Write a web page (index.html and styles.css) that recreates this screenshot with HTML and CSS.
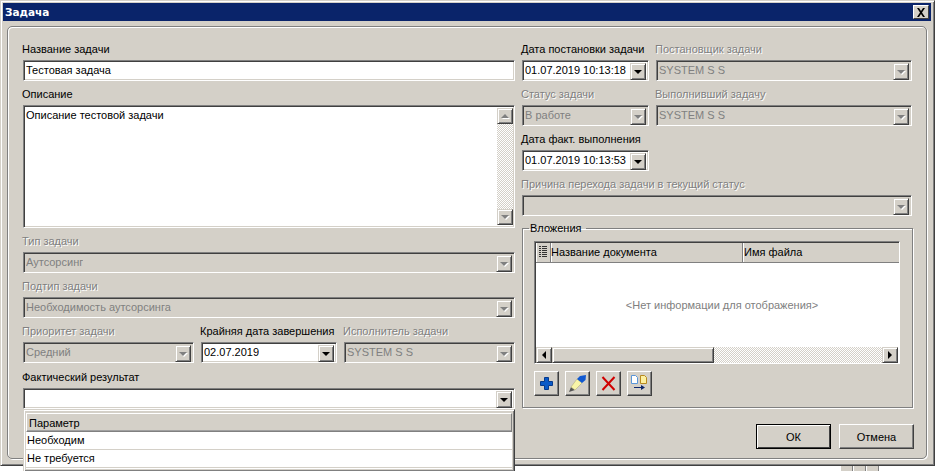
FILE: index.html
```html
<!DOCTYPE html>
<html lang="ru">
<head>
    <meta charset="UTF-8">
    <meta name="viewport" content="width=device-width, initial-scale=1.0">
    <title>Задача</title>
    <link rel="stylesheet" href="styles.css">
</head>
<body>
    <div class="window">
        <div class="titlebar">
            <span>Задача</span>
            <button class="close-btn">
                <svg width="10" height="9" viewBox="0 0 10 9"><path d="M1 0h2l2 3 2-3h2L6 4.500 9 9H7L5 6 3 9H1l3-4.500z" fill="#000"/></svg>
            </button>
        </div>
        <div class="panel">
            <div class="col-left">
                <div class="field">
                    <label>Название задачи</label>
                    <div class="input">Тестовая задача</div>
                </div>
                <div class="field">
                    <label>Описание</label>
                    <div class="input textarea">
                        <span class="textarea-text">Описание тестовой задачи</span>
                        <div class="vscroll">
                            <div class="arrow-btn disabled"><i class="tri-up"></i></div>
                            <div class="track"></div>
                            <div class="arrow-btn disabled"><i class="tri-down"></i></div>
                        </div>
                    </div>
                </div>
                <div class="field disabled">
                    <label>Тип задачи</label>
                    <div class="input combo"><span>Аутсорсинг</span><div class="arrow-btn"><i class="tri-down"></i></div></div>
                </div>
                <div class="field disabled">
                    <label>Подтип задачи</label>
                    <div class="input combo"><span>Необходимость аутсорсинга</span><div class="arrow-btn"><i class="tri-down"></i></div></div>
                </div>
                <div class="row-three">
                    <div class="field disabled">
                        <label>Приоритет задачи</label>
                        <div class="input combo"><span>Средний</span><div class="arrow-btn"><i class="tri-down"></i></div></div>
                    </div>
                    <div class="field">
                        <label>Крайняя дата завершения</label>
                        <div class="input combo"><span>02.07.2019</span><div class="arrow-btn"><i class="tri-down"></i></div></div>
                    </div>
                    <div class="field disabled">
                        <label>Исполнитель задачи</label>
                        <div class="input combo"><span>SYSTEM S S</span><div class="arrow-btn"><i class="tri-down"></i></div></div>
                    </div>
                </div>
                <div class="field result-field">
                    <label>Фактический результат</label>
                    <div class="input combo"><span></span><div class="arrow-btn"><i class="tri-down"></i></div></div>
                    <div class="dropdown">
                        <div class="dropdown-inner">
                            <div class="dropdown-head">Параметр</div>
                            <div class="dropdown-item">Необходим</div>
                            <div class="dropdown-item">Не требуется</div>
                        </div>
                    </div>
                </div>
            </div>

            <div class="col-right">
                <div class="row-two">
                    <div class="field">
                        <label>Дата постановки задачи</label>
                        <div class="input combo"><span>01.07.2019 10:13:18</span><div class="arrow-btn"><i class="tri-down"></i></div></div>
                    </div>
                    <div class="field disabled">
                        <label>Постановщик задачи</label>
                        <div class="input combo"><span>SYSTEM S S</span><div class="arrow-btn"><i class="tri-down"></i></div></div>
                    </div>
                </div>
                <div class="row-two">
                    <div class="field disabled">
                        <label>Статус задачи</label>
                        <div class="input combo"><span>В работе</span><div class="arrow-btn"><i class="tri-down"></i></div></div>
                    </div>
                    <div class="field disabled">
                        <label>Выполнивший задачу</label>
                        <div class="input combo"><span>SYSTEM S S</span><div class="arrow-btn"><i class="tri-down"></i></div></div>
                    </div>
                </div>
                <div class="row-two">
                    <div class="field">
                        <label>Дата факт. выполнения</label>
                        <div class="input combo"><span>01.07.2019 10:13:53</span><div class="arrow-btn"><i class="tri-down"></i></div></div>
                    </div>
                </div>
                <div class="field disabled">
                    <label>Причина перехода задачи в текущий статус</label>
                    <div class="input combo"><span></span><div class="arrow-btn"><i class="tri-down"></i></div></div>
                </div>

                <fieldset class="attachments">
                    <legend>Вложения</legend>
                    <div class="grid">
                        <div class="grid-head">
                            <div class="head-cell head-icon">
                                <svg width="8" height="11" viewBox="0 0 8 11"><path d="M0 0h2v1H0zM3 0h5v1H3zM0 2h2v1H0zM3 2h5v1H3zM0 4h2v1H0zM3 4h5v1H3zM0 6h2v1H0zM3 6h5v1H3zM0 8h2v1H0zM3 8h5v1H3zM0 10h2v1H0zM3 10h5v1H3z" fill="#333"/></svg>
                            </div>
                            <div class="head-cell head-name">Название документа</div>
                            <div class="head-cell head-file">Имя файла</div>
                        </div>
                        <div class="grid-empty">&lt;Нет информации для отображения&gt;</div>
                        <div class="hscroll">
                            <div class="arrow-btn"><i class="tri-left"></i></div>
                            <div class="thumb"></div>
                            <div class="track"></div>
                            <div class="arrow-btn"><i class="tri-right"></i></div>
                        </div>
                    </div>
                    <div class="tools">
                        <button class="tool-btn">
                            <svg width="13" height="13" viewBox="0 0 13 13"><path d="M4.500.5h4v4h4v4h-4v4h-4v-4h-4v-4h4z" fill="#0a5ac8" stroke="#063a8c"/></svg>
                        </button>
                        <button class="tool-btn">
                            <svg width="17" height="17" viewBox="0 0 17 17"><path d="M0 17l2-5 4 3z" fill="#555"/><path d="M2 12l6-8 5 4-7 7z" fill="#f8f4a8" stroke="#a8a470" stroke-width=".5"/><path d="M8 4l3-3 6-1-.5 5-3.500 3z" fill="#1058d0"/></svg>
                        </button>
                        <button class="tool-btn">
                            <svg width="15" height="15" viewBox="0 0 15 15"><path d="M1.500 1l12 13M13.500 1L1.500 14" stroke="#d00000" stroke-width="2" fill="none"/></svg>
                        </button>
                        <button class="tool-btn">
                            <svg width="23" height="23" viewBox="0 0 23 23"><path d="M3.500 3.500h4l2 2v6h-6z" fill="#fff" stroke="#5a96d8"/><path d="M12.500 3.500h4l2 2v6h-6z" fill="#fdf0a0" stroke="#b88a20"/><path d="M6 15.500h8" stroke="#0a246a"/><path d="M13 13l4 2.500-4 2.500z" fill="#0a246a"/></svg>
                        </button>
                    </div>
                </fieldset>

                <div class="actions">
                    <button class="btn btn-default">ОК</button>
                    <button class="btn">Отмена</button>
                </div>
            </div>
        </div>
    </div>
    <div class="taskbar-bits"><i></i><i></i><i></i></div>
</body>
</html>
```

FILE: styles.css
```css
* {
    box-sizing: border-box;
}

body {
    margin: 0;
    height: 471px;
    overflow: hidden;
    background-color: white;
    font-family: "Liberation Sans", Arial, sans-serif;
    font-size: 11px;
    color: black;
}

.window {
    width: 935px;
    height: 466px;
    padding: 3px;
    background-color: #d4d0c8;
    border: 1px solid;
    border-color: #d4d0c8 #404040 #404040 #d4d0c8;
    box-shadow: inset 1px 1px 0 white, inset -1px -1px 0 #808080;
}

.titlebar {
    height: 18px;
    margin: -1px 0 0 -1px;
    padding: 0 2px 0 2px;
    display: flex;
    align-items: center;
    justify-content: space-between;
    background-color: #0a246a;
    color: white;
    font-family: "DejaVu Sans", sans-serif;
    font-size: 10.500px;
    font-weight: bold;
}

.close-btn {
    width: 16px;
    height: 14px;
    padding: 0;
    display: flex;
    align-items: center;
    justify-content: center;
    background-color: #d4d0c8;
    border: 1px solid;
    border-color: white #404040 #404040 white;
}

.panel {
    width: 920px;
    height: 433px;
    margin: 5px 0 0 3px;
    padding: 15px 0 0 15px;
    display: flex;
    gap: 7px;
    border: 1px solid #808080;
    border-radius: 5px;
    box-shadow: 1px 1px 0 white, inset 1px 1px 0 white;
}

.col-left {
    width: 492px;
    display: flex;
    flex-direction: column;
    gap: 6px;
}

.col-right {
    width: 390px;
    display: flex;
    flex-direction: column;
    gap: 6px;
}

.field {
    display: flex;
    flex-direction: column;
    min-width: 0;
}

label {
    height: 14px;
    margin: 0 0 4px -1px;
    line-height: 14px;
    white-space: nowrap;
}

.field.disabled label {
    color: #808080;
    text-shadow: 1px 1px 0 white;
}

.input {
    height: 21px;
    padding: 2px;
    line-height: 15px;
    background-color: white;
    border: 1px solid;
    border-color: #808080 white white #808080;
    box-shadow: inset 1px 1px 0 #404040, inset -1px -1px 0 #d4d0c8;
    white-space: nowrap;
}

.combo {
    display: flex;
    justify-content: space-between;
}

.combo span {
    overflow: hidden;
}

.field.disabled .input {
    background-color: #d4d0c8;
    color: #808080;
}

.textarea {
    height: 123px;
    padding-right: 1px;
    display: flex;
    justify-content: space-between;
}

.textarea-text {
    height: 17px;
}

.arrow-btn {
    flex: none;
    width: 16px;
    height: 17px;
    display: flex;
    align-items: center;
    justify-content: center;
    background-color: #d4d0c8;
    border: 1px solid;
    border-color: #d4d0c8 #404040 #404040 #d4d0c8;
    box-shadow: inset 1px 1px 0 white, inset -1px -1px 0 #808080;
}

.arrow-btn i {
    width: 0;
    height: 0;
    border-style: solid;
    border-color: transparent;
}

.tri-down {
    border-width: 4px 4px 0 4px;
    border-top-color: black !important;
}

.tri-up {
    border-width: 0 4px 4px 4px;
    border-bottom-color: black !important;
}

.tri-left {
    border-width: 4px 4px 4px 0;
    border-right-color: black !important;
}

.tri-right {
    border-width: 4px 0 4px 4px;
    border-left-color: black !important;
}

.field.disabled .tri-down,
.arrow-btn.disabled .tri-down {
    border-top-color: #808080 !important;
    filter: drop-shadow(1px 1px 0 white);
}

.arrow-btn.disabled .tri-up {
    border-bottom-color: #808080 !important;
    filter: drop-shadow(1px 1px 0 white);
}

.track {
    flex: 1;
    background-color: #d4d0c8;
    background-image: repeating-conic-gradient(white 0 25%, #d4d0c8 0 50%);
    background-size: 2px 2px;
}

.vscroll {
    width: 16px;
    display: flex;
    flex-direction: column;
}

.vscroll .arrow-btn {
    height: 16px;
}

.row-three {
    display: grid;
    grid-template-columns: 171px 136px 1fr;
    gap: 7px;
}

.row-two {
    display: grid;
    grid-template-columns: 127px 1fr;
    gap: 7px;
}

.result-field {
    position: relative;
    margin-top: 1px;
}

.dropdown {
    position: absolute;
    top: 39px;
    left: 0;
    width: 492px;
    height: 63px;
    padding: 3px 2px 2px 2px;
    background-color: #d4d0c8;
    border: 1px solid;
    border-color: #d4d0c8 #404040 #404040 #d4d0c8;
    box-shadow: inset 1px 1px 0 white, inset -1px -1px 0 #808080;
    z-index: 10;
}

.dropdown-inner {
    height: 100%;
    background-color: white;
}

.dropdown-head {
    height: 19px;
    padding-left: 2px;
    line-height: 18px;
    background-color: #d4d0c8;
    border: 1px solid #808080;
    border-left-color: white;
    border-top-color: white;
    box-shadow: inset 0 -1px 0 #a0a0a0;
}

.dropdown-item {
    height: 18px;
    padding-left: 1px;
    line-height: 17px;
    border-bottom: 1px solid #d4d0c8;
}

.attachments {
    width: 389px;
    height: 186px;
    margin: 0;
    padding: 6px 12px 0 11px;
    border: 1px solid #808080;
    box-shadow: 1px 1px 0 white, inset 1px 1px 0 white;
}

.attachments legend {
    margin-left: -5px;
    padding: 0 4px 0 1px;
    line-height: 13px;
}

.grid {
    width: 366px;
    height: 123px;
    display: flex;
    flex-direction: column;
    background-color: white;
    border: 1px solid;
    border-color: #808080 white white #808080;
    box-shadow: inset 1px 1px 0 #404040;
}

.grid-head {
    flex: none;
    height: 20px;
    margin: 1px 0 0 1px;
    display: flex;
    background-color: #d4d0c8;
    border-bottom: 1px solid #808080;
}

.head-cell {
    line-height: 19px;
    border-right: 1px solid #808080;
    box-shadow: inset 1px 0 0 white;
}

.head-icon {
    width: 15px;
    padding: 3px 0 0 3px;
    line-height: 0;
}

.head-name {
    width: 192px;
}

.head-file {
    flex: 1;
    border-right: none;
    padding-left: 1px;
}

.grid-empty {
    flex: 1;
    display: flex;
    align-items: center;
    justify-content: center;
    color: #808080;
    padding: 0 0 1px 10px;
}

.hscroll {
    flex: none;
    height: 16px;
    margin: 0 1px;
    display: flex;
}

.hscroll .arrow-btn {
    height: 16px;
}

.thumb {
    width: 162px;
    background-color: #d4d0c8;
    border: 1px solid;
    border-color: #d4d0c8 #404040 #404040 #d4d0c8;
    box-shadow: inset 1px 1px 0 white, inset -1px -1px 0 #808080;
}

.tools {
    margin-top: 7px;
    display: flex;
    gap: 6px;
}

.tool-btn {
    width: 25px;
    height: 25px;
    padding: 0;
    display: flex;
    align-items: center;
    justify-content: center;
    background-color: #d4d0c8;
    border: 1px solid;
    border-color: white #404040 #404040 white;
    box-shadow: inset -1px -1px 0 #808080;
}

.actions {
    margin: 10px -2px 0 0;
    display: flex;
    justify-content: flex-end;
    gap: 8px;
}

.btn {
    width: 75px;
    height: 25px;
    padding: 0;
    background-color: #d4d0c8;
    font-family: inherit;
    font-size: inherit;
    color: black;
    border: 1px solid;
    border-color: white #404040 #404040 white;
    box-shadow: inset -1px -1px 0 #808080;
}

.btn-default {
    border-color: black;
    box-shadow: inset 1px 1px 0 white, inset -1px -1px 0 #404040;
}

.taskbar-bits {
    margin-left: 840px;
    display: flex;
    height: 5px;
}

.taskbar-bits i {
    width: 13px;
    height: 5px;
    background-color: #d4d0c8;
    border-left: 1px solid white;
    border-right: 1px solid #808080;
}
```
